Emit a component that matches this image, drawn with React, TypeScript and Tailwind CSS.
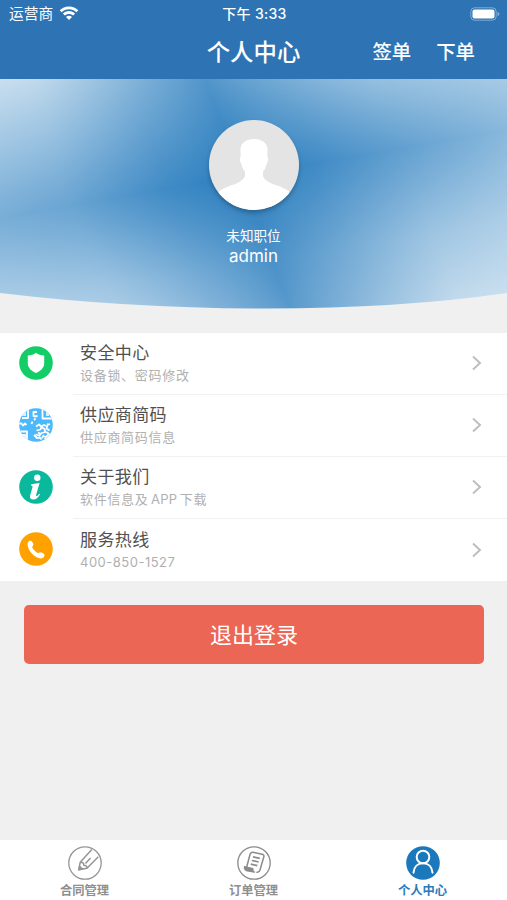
import React from "react";

const FONT = "font-[Inter,'Noto_Sans_CJK_SC',sans-serif]";

function ShieldIcon() {
  return (
    <svg viewBox="0 0 34 34" className="size-[34px]" aria-hidden>
      <circle cx="17" cy="17" r="16.8" fill="#13ce66" />
      <path d="M17 6.800c2.200 1.800 4.800 2.500 8.200 2.700v7.800c0 4.600-3.600 7.900-8.200 9.700-4.600-1.800-8.200-5.100-8.200-9.700V9.500c3.400-.2 6-.9 8.200-2.700z" fill="#fff" />
    </svg>
  );
}

function CodeIcon() {
  return (
    <svg viewBox="0 0 34 34" className="size-[34px]" aria-hidden>
      <defs>
        <clipPath id="code-clip">
          <circle cx="17" cy="17" r="16.8" />
        </clipPath>
      </defs>
      <g clipPath="url(#code-clip)">
        <rect width="34" height="34" fill="#4db8fb" />
        <g fill="none" stroke="#fff" strokeWidth="1.8" strokeLinejoin="round">
          <path d="M3 10H9V2M23.500 1v9.500H33M0 15.500h2.500l1.500 2 2-2 1.500 1.500M0 23.500h8V33M3 27h3v4" />
          <path d="M18 4h-3.500v4l2.500.5 1.500-1M16.500 10.500l-1.500 1.500M13.500 13.500l-1 2.500M17 18.500l3-2 2 2 3-1.500 2 1M29 15.500l-1.500 5 3 2M17.500 22.500l4-1 1-2.500 3 2 1 3-4 1-2 2.500-4-1M27.500 24l2.500 2-3 3-3.500-1M15 27l3 3 3-.5 1.500 2M19 24.500l2 1M25 27l-2 3M28 17l3-1M25.500 31l2-1" />
        </g>
        <path d="M4 3h3v5H3zM27 4h3v4h-3z" fill="#fff" opacity=".8" />
      </g>
    </svg>
  );
}

function InfoIcon() {
  return (
    <svg viewBox="0 0 34 34" className="size-[34px]" aria-hidden>
      <circle cx="17" cy="17" r="16.8" fill="#0ab99c" />
      <circle cx="18.3" cy="7.700" r="3.200" fill="#fff" />
      <path d="M12.300 14.200l8.300-1.300-3.400 11.900c-.3 1.200.1 1.600.7 1.300.9-.5 1.600-1.400 2.300-2.400l.9.600c-1.600 3-3.800 5.300-6.700 5.300-2.900 0-3.900-1.800-3.200-4.400l2.200-7.700c.3-1.300.1-1.900-1.500-2z" fill="#fff" />
    </svg>
  );
}

function PhoneIcon() {
  return (
    <svg viewBox="0 0 34 34" className="size-[34px]" aria-hidden>
      <circle cx="17" cy="17" r="16.8" fill="#ffa200" />
      <path d="M9 10.200c.5-1.300 2.200-2 3.300-1.100 1.400 1.100 2.300 2.700 2 4-.2.900-1 1.300-1.100 2.100 1 2.300 3.300 4.700 5.600 5.800.8 0 1.300-.7 2.300-.8 1.600 0 3.800 1.200 4.300 2.600.5 1.700-1.400 3.600-3.200 3.600C15.700 26.500 8.600 18 8.600 12.700c0-1 .1-1.800.4-2.500z" fill="#fff" />
    </svg>
  );
}

const rows = [
  { title: "安全中心", desc: "设备锁、密码修改", icon: <ShieldIcon /> },
  { title: "供应商简码", desc: "供应商简码信息", icon: <CodeIcon /> },
  {
    title: "关于我们",
    desc: (
      <>
        软件信息及 <span className="tracking-[0.2px]">APP</span> 下载
      </>
    ),
    icon: <InfoIcon />,
  },
  { title: "服务热线", desc: <span className="tracking-[0.5px]">400-850-1527</span>, icon: <PhoneIcon /> },
];

function ContractIcon() {
  return (
    <svg viewBox="0 0 34 34" className="size-[34px]" fill="none" stroke="#959595" strokeWidth="1.500" strokeLinejoin="round" aria-hidden>
      <circle cx="17" cy="17" r="16.200" strokeWidth="1.300" />
      <path d="M12.200 16.200L23.800 3.400M19 22.300L30.300 10.800M17.500 17.500L22.500 12M12.200 16.200l-1.400 7.500 8.200-1.400c.1-1.900-1.100-3.100-3.200-3.100.2-2-1.200-3.200-3.600-3z" />
      <path d="M11.500 20.300l3 2.800-3.700.6z" fill="#959595" />
    </svg>
  );
}

function OrderIcon() {
  return (
    <svg viewBox="0 0 34 34" className="size-[34px]" fill="none" stroke="#8b8b8b" strokeWidth="1.500" strokeLinejoin="round" aria-hidden>
      <circle cx="17" cy="17" r="16.200" strokeWidth="1.300" />
      <path d="M9.700 21L13 8.500c.5-1.800 1.500-2.500 2.900-2.200l9.300 1.900c1.600.4 2 1.500 1.500 3.100L23 24c-.6 1.900-1.800 2.700-3.600 2.200" />
      <path d="M7.500 20.800l8.300 1.900c-.4 1.700.1 3 1.600 3.400l-7-1.300c-2-.5-3.100-2-2.900-4z" fill="#8b8b8b" />
      <path d="M16 10.800l6.800 1.500M14.900 14.500l6.800 1.500M13.800 18.200l6.600 1.500" strokeWidth="1.700" />
    </svg>
  );
}

function ProfileIcon() {
  return (
    <svg viewBox="0 0 34 34" className="size-[34px]" fill="none" stroke="#fff" strokeWidth="2" strokeLinecap="round" aria-hidden>
      <circle cx="17" cy="17" r="16.8" fill="#1b78bd" stroke="none" />
      <circle cx="17" cy="11" r="6.300" />
      <path d="M7.500 26.700c.5-6 4.300-9.400 9.500-9.400s9 3.400 9.500 9.400" />
    </svg>
  );
}

const tabs = [
  { label: "合同管理", icon: <ContractIcon />, active: false },
  { label: "订单管理", icon: <OrderIcon />, active: false },
  { label: "个人中心", icon: <ProfileIcon />, active: true },
];

function Header() {
  return (
    <header className="h-[79px] bg-[#2e74b5] text-white">
      <div className="grid h-[27px] grid-cols-3 items-center pl-[9px] pr-[7px]">
        <div className="flex items-center gap-[6px]">
          <span className="pt-px text-[14.700px] leading-[26px]">运营商</span>
          <svg viewBox="0 0 20 15" className="h-[15px] w-5" fill="#fff" aria-hidden>
            <path d="M10 .5c3.600 0 6.900 1.400 9.300 3.800l-1.900 2C15.500 4.400 12.900 3.200 10 3.200S4.500 4.400 2.600 6.300l-1.900-2C3.100 1.900 6.400.5 10 .5z" />
            <path d="M10 5.100c2.400 0 4.500.9 6.100 2.500l-1.900 2c-1.100-1.100-2.500-1.700-4.200-1.700s-3.100.6-4.200 1.700l-1.900-2C5.500 6 7.600 5.100 10 5.100z" />
            <path d="M10 9.700c1.200 0 2.200.4 3 1.200l-3 3.200-3-3.200c.8-.8 1.800-1.200 3-1.200z" />
          </svg>
        </div>
        <span className="pt-px text-center text-[14px] font-medium leading-[26px] tracking-[0.300px]">下午 3:33</span>
        <svg viewBox="0 0 30 14" className="h-[14px] w-[30px] justify-self-end" aria-hidden>
          <rect x=".8" y=".8" width="25.400" height="12.400" rx="3.800" fill="none" stroke="#fff" strokeOpacity=".4" />
          <rect x="2.500" y="2.500" width="22" height="9" rx="2" fill="#fff" />
          <path d="M27.500 4.700c1.200.5 2 1.300 2 2.300s-.8 1.800-2 2.300z" fill="#fff" fillOpacity=".4" />
        </svg>
      </div>
      <div className="grid h-[52px] grid-cols-[1fr_auto_1fr] items-center px-[32px]">
        <span />
        <h1 className="text-[23.400px] font-medium">个人中心</h1>
        <div className="flex justify-end gap-[25px] text-[19.400px] font-medium">
          <button>签单</button>
          <button>下单</button>
        </div>
      </div>
    </header>
  );
}

function Hero() {
  return (
    <section className="relative h-[230px] overflow-hidden bg-[#2b7ebf]">
      {/* two crossing dark bands: one near horizontal, one near vertical */}
      <div className="absolute inset-0 bg-[linear-gradient(170.200deg,rgba(236,243,247,0.850)_0%,rgba(226,238,246,0.480)_20%,rgba(226,238,246,0.140)_36%,rgba(226,238,246,0)_43.700%,rgba(226,238,246,0.120)_51%,rgba(226,238,246,0.540)_72%,rgba(236,243,247,0.900)_100%)] [mask-image:linear-gradient(69.700deg,black_0%,rgba(0,0,0,0.900)_20%,rgba(0,0,0,0.550)_38%,rgba(0,0,0,0.320)_49%,rgba(0,0,0,0.550)_60%,rgba(0,0,0,0.900)_78%,black_100%)]" />
      <div className="absolute inset-0 bg-[linear-gradient(69.700deg,rgba(210,229,243,0.500)_0%,rgba(210,229,243,0.380)_18%,rgba(210,229,243,0.120)_36%,rgba(210,229,243,0)_49%,rgba(210,229,243,0.120)_62%,rgba(210,229,243,0.380)_82%,rgba(210,229,243,0.600)_100%)]" />
      <div className="relative flex flex-col items-center pt-[41px] text-white">
        <svg viewBox="0 0 90 90" className="size-[90px] rounded-full shadow-[0_3px_4px_rgba(0,0,0,0.25)]" aria-hidden>
          <rect width="90" height="90" fill="#e4e4e4" />
          <path d="M45 19c8.500 0 14 4.500 13.500 11.500l-.2 6c1.300.9 1 6-1 8-.4 3-1.500 5.200-3.300 7v5c3 5.500 10 7.500 17 10 4 1.500 7 3 9.500 5.500V90H9.500V72c2.500-2.500 5.500-4 9.500-5.500 7-2.500 14-4.500 17-10v-5c-1.800-1.800-2.900-4-3.300-7-2-2-2.300-7.100-1-8l-.2-6C31 23.500 36.500 19 45 19z" fill="#fff" />
        </svg>
        <p className="mt-[16px] text-[13.600px] leading-[20px]">未知职位</p>
        <p className="text-[17px] leading-[20px]">admin</p>
      </div>
      <svg viewBox="0 0 507 18" className="absolute bottom-0 left-0 h-[18px] w-[507px]" aria-hidden>
        <path d="M0 2Q130 17.500 265 17.500T507 2V18H0z" fill="#f0f0f0" />
      </svg>
    </section>
  );
}

export default function App() {
  return (
    <div className={`flex h-[900px] w-[507px] flex-col overflow-hidden bg-[#f0f0f0] ${FONT}`}>
      <Header />
      <Hero />

      <ul className="mt-[23.500px] bg-white">
        {rows.map((row, i) => (
          <li key={row.title} className="flex h-[62.100px] items-center pl-[19px]">
            <span className="pb-px">{row.icon}</span>
            <div className={`ml-5 flex h-full flex-1 items-center justify-between pl-[7px] pr-[24px] ${i < rows.length - 1 ? "border-b border-[#f1f1f1]" : ""}`}>
              <div>
                <p className="text-[17px] leading-[24px] tracking-[0.400px] text-[#505050]">{row.title}</p>
                <p className="text-[13px] leading-[20px] tracking-[0.700px] text-[#b0b0b0] [word-spacing:-1.800px]">{row.desc}</p>
              </div>
              <svg viewBox="0 0 12 16" className="h-4 w-3" fill="none" stroke="#bdbdbd" strokeWidth="1.900" aria-hidden>
                <path d="M2 1.500L9 8l-7 6.500" />
              </svg>
            </div>
          </li>
        ))}
      </ul>

      <button className="ml-[24px] mr-[23px] mt-[24px] h-[59px] rounded-[5px] bg-[#ec6655] pt-[2px] text-[22px] text-white">
        退出登录
      </button>

      <nav className="mt-auto grid h-[60px] grid-cols-3 bg-white">
        {tabs.map((tab) => (
          <div key={tab.label} className="flex flex-col items-center pt-[6px]">
            {tab.icon}
            <span className={`mt-[2px] text-[12.300px] font-semibold leading-[18px] ${tab.active ? "text-[#2b7bbb]" : "text-[#8f8f8f]"}`}>
              {tab.label}
            </span>
          </div>
        ))}
      </nav>
    </div>
  );
}
